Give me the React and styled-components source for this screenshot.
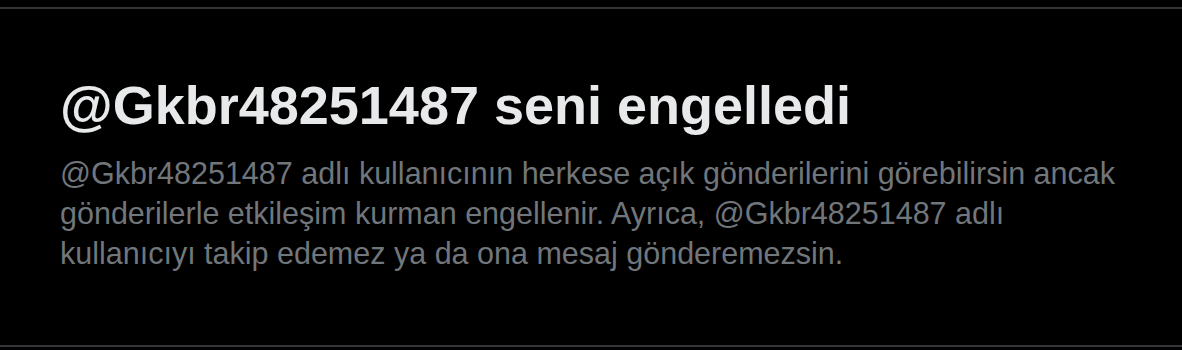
import React from "react";
import styled, { createGlobalStyle } from "styled-components";

const Global = createGlobalStyle`
  html, body { margin: 0; padding: 0; background: #000; }
  body { font-family: "Liberation Sans", Arial, sans-serif; }
`;

const Frame = styled.div`
  width: 1182px;
  height: 350px;
  background: #000;
  padding-top: 7px;
  box-sizing: border-box;
`;

const Panel = styled.section`
  height: 340px;
  box-sizing: border-box;
  border-top: 2px solid #333538;
  border-bottom: 2px solid #333538;
  padding: 68px 60px 0 60px;
`;

const Title = styled.h1`
  margin: 0;
  font-size: 54px;
  line-height: 56px;
  font-weight: 700;
  color: #e7e9ea;
  white-space: nowrap;
`;

const Body = styled.p`
  margin: 20px 0 0 0;
  font-size: 30.5px;
  line-height: 40px;
  color: #71767b;
  white-space: nowrap;
`;

export default function App() {
  return (
    <>
      <Global />
      <Frame>
        <Panel>
          <Title>@Gkbr48251487 seni engelledi</Title>
          <Body>
            @Gkbr48251487 adlı kullanıcının herkese açık gönderilerini görebilirsin ancak
            <br />
            gönderilerle etkileşim kurman engellenir. Ayrıca, @Gkbr48251487 adlı
            <br />
            kullanıcıyı takip edemez ya da ona mesaj gönderemezsin.
          </Body>
        </Panel>
      </Frame>
    </>
  );
}
